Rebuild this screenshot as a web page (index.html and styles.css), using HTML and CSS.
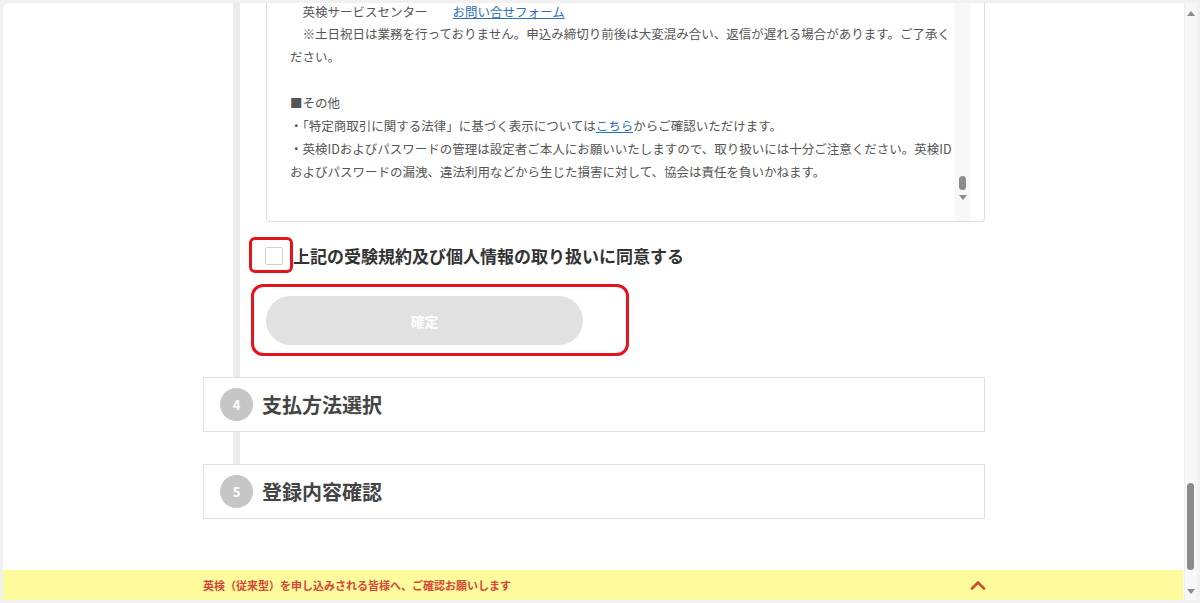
FILE: index.html
```html
<!DOCTYPE html>
<html lang="ja">
<head>
  <meta charset="UTF-8">
  <meta name="viewport" content="width=device-width, initial-scale=1.0">
  <title>英検 申込み</title>
  <link rel="stylesheet" href="styles.css">
</head>
<body>
  <div class="window">
    <div class="viewport">
      <div class="content">
        <div class="steps">
          <div class="step-body">
            <div class="terms">
              <div class="terms-text">
                <p class="first">　英検サービスセンター　　<a href="#">お問い合せフォーム</a></p>
                <p>　※土日祝日は業務を行っておりません。申込み締切り前後は大変混み合い、返信が遅れる場合があります。ご了承ください。</p>
                <p>&nbsp;</p>
                <p>■その他</p>
                <p>・「特定商取引に関する法律」に基づく表示については<a href="#">こちら</a>からご確認いただけます。</p>
                <p>・英検IDおよびパスワードの管理は設定者ご本人にお願いいたしますので、取り扱いには十分ご注意ください。英検IDおよびパスワードの漏洩、違法利用などから生じた損害に対して、協会は責任を負いかねます。</p>
              </div>
              <div class="mini-track">
                <span class="mini-thumb"></span>
                <span class="mini-arrow"></span>
              </div>
            </div>

            <label class="agree">
              <span class="checkbox"></span>
              <span class="agree-text">上記の受験規約及び個人情報の取り扱いに同意する</span>
              <span class="mark mark-check"></span>
            </label>

            <div class="confirm-wrap">
              <button class="confirm" disabled>確定</button>
              <span class="mark mark-button"></span>
            </div>
          </div>

          <div class="step-card">
            <span class="step-num">4</span>
            <span class="step-title">支払方法選択</span>
          </div>
          <div class="connector"></div>
          <div class="step-card">
            <span class="step-num">5</span>
            <span class="step-title">登録内容確認</span>
          </div>
        </div>
      </div>

      <div class="notice-bar">
        <span class="notice-text">英検（従来型）を申し込みされる皆様へ、ご確認お願いします</span>
        <svg class="chevron" width="16" height="10" viewBox="0 0 16 10">
          <path d="M2 8.5 L8 2.5 L14 8.5" fill="none" stroke="#cf4f2e" stroke-width="2.6" stroke-linecap="round" stroke-linejoin="round"/>
        </svg>
      </div>
    </div>

    <div class="scrollbar">
      <span class="sb-up"></span>
      <span class="sb-thumb"></span>
      <span class="sb-down"></span>
    </div>
  </div>
</body>
</html>
```

FILE: styles.css
```css
html, body {
  margin: 0;
  height: 100%;
}
body {
  font-family: "Noto Sans CJK JP", "Noto Sans", sans-serif;
  background-color: #f1f1f1;
  padding: 3px;
  box-sizing: border-box;
  overflow: hidden;
}
.window {
  display: flex;
  height: 597px;
  background-color: #fff;
  border-top-left-radius: 6px;
  overflow: hidden;
}
.viewport {
  flex: 1;
  display: flex;
  flex-direction: column;
  overflow: hidden;
}
.content {
  flex: 1;
  overflow: hidden;
}
.steps {
  width: 782px;
  margin-left: 200px;
}

/* active step (3) */
.step-body {
  margin-left: 30px;
  border-left: 7px solid #ebebeb;
  padding-left: 26px;
  padding-bottom: 32px;
}
.terms {
  position: relative;
  border: 1px solid #dedede;
  border-top: none;
  border-radius: 0 0 4px 4px;
  padding: 0 26px 38px 23px;
  color: #555;
  font-size: 12.5px;
  line-height: 23px;
}
.terms-text {
  width: 668px;
}
.terms p {
  margin: 0;
}
.terms p.first {
  line-height: 18px;
  margin-bottom: 1px;
}
.terms a {
  color: #2b6fb8;
  text-decoration: underline;
}
.mini-track {
  position: absolute;
  top: 0;
  bottom: 0;
  right: 13px;
  width: 16px;
  background-color: #f8f8f8;
}
.mini-thumb {
  position: absolute;
  right: 5px;
  bottom: 31px;
  width: 7px;
  height: 14px;
  border-radius: 4px;
  background-color: #8c8c8c;
}
.mini-arrow {
  position: absolute;
  right: 4px;
  bottom: 21px;
  width: 0;
  height: 0;
  border-left: 4.5px solid transparent;
  border-right: 4.5px solid transparent;
  border-top: 5px solid #8c8c8c;
}

.agree {
  position: relative;
  display: flex;
  align-items: center;
  margin-top: 22px;
  margin-left: -1px;
  height: 24px;
}
.checkbox {
  width: 16px;
  height: 16px;
  border: 1px solid #cfcfcf;
  border-radius: 2px;
  background-color: #fff;
}
.agree-text {
  margin-left: 10px;
  font-size: 17px;
  font-weight: bold;
  color: #333;
  line-height: 24px;
}

.confirm-wrap {
  position: relative;
  margin-top: 28px;
}
.confirm {
  display: block;
  width: 317px;
  height: 49px;
  border: none;
  border-radius: 25px;
  background-color: #e1e1e1;
  color: #fff;
  font-family: inherit;
  font-size: 14px;
  font-weight: bold;
}

/* red annotation frames */
.mark {
  position: absolute;
  border: 3px solid #e2141c;
  box-sizing: border-box;
}
.mark-check {
  left: -16px;
  top: -7px;
  width: 44px;
  height: 36px;
  border-radius: 6px;
}
.mark-button {
  left: -15px;
  top: -12px;
  width: 378px;
  height: 72px;
  border-radius: 12px;
}

/* collapsed steps */
.step-card {
  display: flex;
  align-items: center;
  height: 53px;
  border: 1px solid #e0e0e0;
  padding-left: 16px;
  background-color: #fff;
}
.step-num {
  width: 33px;
  height: 33px;
  border-radius: 50%;
  background-color: #c6c6c6;
  color: #fff;
  font-size: 13px;
  font-weight: bold;
  display: flex;
  align-items: center;
  justify-content: center;
}
.step-title {
  margin-left: 9px;
  font-size: 20px;
  font-weight: bold;
  color: #444;
}
.connector {
  height: 32px;
  margin-left: 30px;
  width: 7px;
  background-color: #ebebeb;
}

/* bottom notice */
.notice-bar {
  height: 30px;
  display: flex;
  align-items: center;
  background-color: #fdfb9c;
  margin-right: 1px;
}
.notice-text {
  margin-left: 200px;
  font-size: 11px;
  font-weight: bold;
  color: #d6473a;
}
.chevron {
  margin-left: 459px;
}

/* page scrollbar */
.scrollbar {
  position: relative;
  width: 12px;
  background-color: #f7f7f7;
  border-left: 1px solid #ededed;
}
.sb-up {
  position: absolute;
  top: 8px;
  left: 2px;
  border-left: 4px solid transparent;
  border-right: 4px solid transparent;
  border-bottom: 5px solid #8a8a8a;
}
.sb-thumb {
  position: absolute;
  top: 480px;
  left: 2px;
  width: 7px;
  height: 87px;
  border-radius: 4px;
  background-color: #8a8a8a;
}
.sb-down {
  position: absolute;
  bottom: 6px;
  left: 2px;
  border-left: 4px solid transparent;
  border-right: 4px solid transparent;
  border-top: 5px solid #8a8a8a;
}
```
